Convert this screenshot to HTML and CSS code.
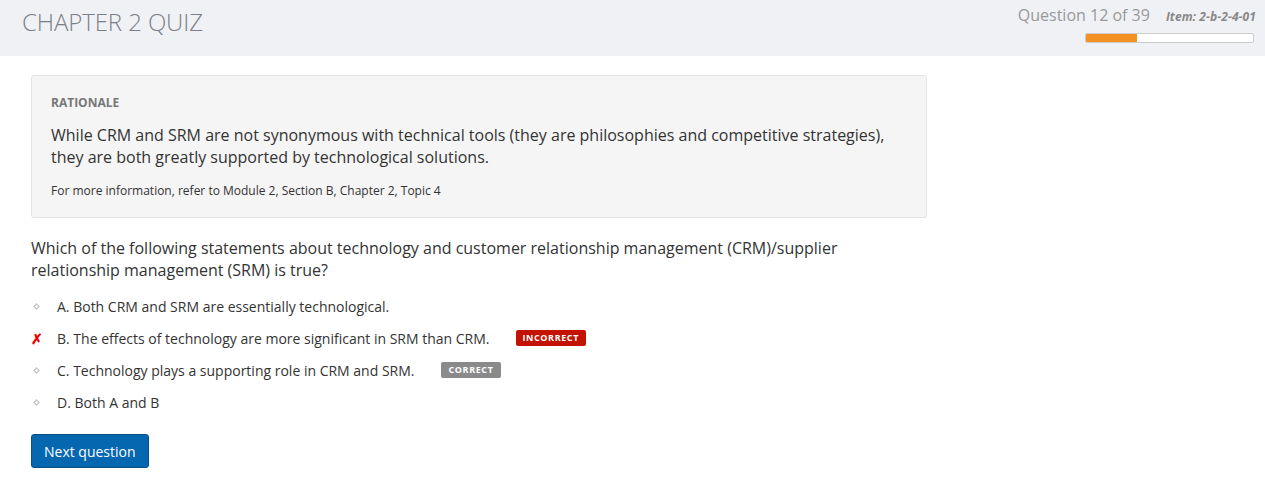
FILE: index.html
```html
<!DOCTYPE html>
<html>
<head>
<meta charset="utf-8">
<link rel="stylesheet" href="styles.css">
</head>
<body>
<header class="top">
  <h1 class="title">CHAPTER 2 QUIZ</h1>
  <div class="status">
    <div class="status-line">
      <span class="qcount">Question 12 of 39</span>
      <span class="item">Item: 2-b-2-4-01</span>
    </div>
    <div class="progress"><div class="progress-fill" style="width:30.8%"></div></div>
  </div>
</header>
<main class="content">
  <section class="rationale">
    <div class="rat-label">RATIONALE</div>
    <p class="rat-text">While CRM and SRM are not synonymous with technical tools (they are philosophies and competitive strategies), they are both greatly supported by technological solutions.</p>
    <p class="rat-ref">For more information, refer to Module 2, Section B, Chapter 2, Topic 4</p>
  </section>
  <p class="question">Which of the following statements about technology and customer relationship management (CRM)/supplier relationship management (SRM) is true?</p>
  <ul class="options">
    <li class="option"><span class="mark"><svg width="7" height="7" viewBox="0 0 7 7"><path d="M3.5 1 L6 3.5 L3.5 6 L1 3.5 Z" fill="none" stroke="#c8c8c8" stroke-width="1.4"/></svg></span><span class="opt-text">A. Both CRM and SRM are essentially technological.</span></li>
    <li class="option"><span class="mark x">✗</span><span class="opt-text">B. The effects of technology are more significant in SRM than CRM.</span><span class="badge badge-wrong">INCORRECT</span></li>
    <li class="option"><span class="mark"><svg width="7" height="7" viewBox="0 0 7 7"><path d="M3.5 1 L6 3.5 L3.5 6 L1 3.5 Z" fill="none" stroke="#c8c8c8" stroke-width="1.4"/></svg></span><span class="opt-text">C. Technology plays a supporting role in CRM and SRM.</span><span class="badge badge-right">CORRECT</span></li>
    <li class="option"><span class="mark"><svg width="7" height="7" viewBox="0 0 7 7"><path d="M3.5 1 L6 3.5 L3.5 6 L1 3.5 Z" fill="none" stroke="#c8c8c8" stroke-width="1.4"/></svg></span><span class="opt-text">D. Both A and B</span></li>
  </ul>
  <button class="next">Next question</button>
</main>
</body>
</html>
```
FILE: styles.css
```css
* { box-sizing: border-box; }
body {
  margin: 0;
  font-family: "Open Sans", "Liberation Sans", sans-serif;
  color: #333;
  background: #fff;
}
.top {
  height: 56px;
  background: #f0f1f5;
  display: flex;
  justify-content: space-between;
  align-items: flex-start;
  padding: 0 9px 0 22px;
}
.title {
  margin: 7px 0 0;
  font-weight: 300;
  font-size: 24px;
  line-height: 30px;
  color: #7a7f87;
  letter-spacing: -0.1px;
}
.status {
  display: flex;
  flex-direction: column;
  align-items: flex-end;
  padding-top: 4px;
}
.status-line {
  display: flex;
  align-items: baseline;
  gap: 16px;
}
.qcount {
  font-size: 16px;
  color: #999;
  line-height: 22px;
}
.item {
  font-size: 12px;
  font-weight: 700;
  font-style: italic;
  color: #888;
  letter-spacing: 0.1px;
}
.progress {
  margin-top: 7px;
  margin-right: 2px;
  width: 169px;
  height: 10px;
  background: #fff;
  border: 1px solid #ccc;
  border-radius: 2px;
  overflow: hidden;
}
.progress-fill {
  height: 100%;
  background: #f29122;
}
.content {
  padding: 19px 31px 0;
}
.rationale {
  width: 896px;
  background: #f5f5f5;
  border: 1px solid #e3e3e3;
  border-radius: 3px;
  padding: 18px 19px 17px;
}
.rat-label {
  font-size: 12px;
  font-weight: 700;
  color: #777;
  line-height: 18px;
}
.rat-text {
  margin: 12px 0 0;
  font-size: 16px;
  line-height: 22px;
  color: #333;
}
.rat-ref {
  margin: 14px 0 0;
  font-size: 12px;
  line-height: 18px;
  color: #333;
}
.question {
  margin: 19px 0 0;
  width: 840px;
  font-size: 16px;
  line-height: 22px;
  color: #333;
}
.options {
  list-style: none;
  margin: 9px 0 0;
  padding: 0;
}
.option {
  display: flex;
  align-items: center;
  height: 32px;
  font-size: 14px;
  color: #333;
}
.mark {
  width: 26px;
  display: flex;
  align-items: center;
  padding-left: 2px;
}
.mark.x {
  color: #e00;
  font-size: 14px;
  font-weight: 700;
  padding-left: 0;
}
.badge {
  margin-left: 26px;
  font-size: 9px;
  font-weight: 700;
  letter-spacing: 0.6px;
  color: #fff;
  border-radius: 2px;
  padding: 0 7px;
  height: 16px;
  line-height: 16px;
}
.badge-wrong { background: #c41200; }
.badge-right { background: #8a8a8a; padding: 0 8px; }
.next {
  margin-top: 16px;
  background: #0467b0;
  border: 1px solid #0b4f85;
  border-radius: 3px;
  color: #fff;
  font-family: "Open Sans", "Liberation Sans", sans-serif;
  font-size: 14px;
  height: 34px;
  padding: 0 12px;
  cursor: pointer;
}
```
